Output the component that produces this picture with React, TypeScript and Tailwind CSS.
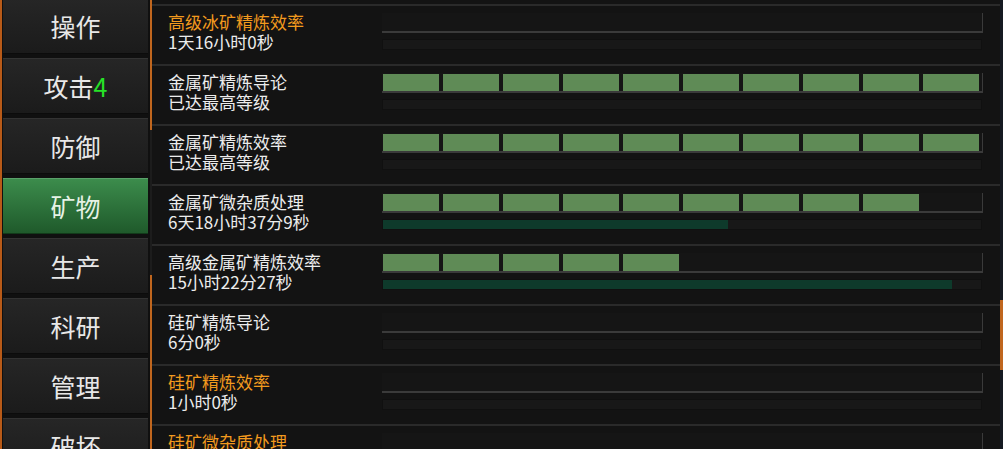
import React from "react";

type Tech = {
  name: string;
  sub: string;
  orange?: boolean;
  level: number;
  time?: number;
};

const techs: Tech[] = [
  { name: "高级冰矿精炼效率", sub: "1天16小时0秒", orange: true, level: 0 },
  { name: "金属矿精炼导论", sub: "已达最高等级", level: 10 },
  { name: "金属矿精炼效率", sub: "已达最高等级", level: 10 },
  { name: "金属矿微杂质处理", sub: "6天18小时37分9秒", level: 9, time: 345 },
  { name: "高级金属矿精炼效率", sub: "15小时22分27秒", level: 5, time: 569 },
  { name: "硅矿精炼导论", sub: "6分0秒", level: 0 },
  { name: "硅矿精炼效率", sub: "1小时0秒", orange: true, level: 0 },
  { name: "硅矿微杂质处理", sub: "", orange: true, level: 0 },
];

const tabs = ["操作", "攻击", "防御", "矿物", "生产", "科研", "管理", "破坏"];

function SideButton({ label, index }: { label: string; index: number }) {
  const active = label === "矿物";
  return (
    <div
      className={
        "h-[56px] shrink-0 flex items-center justify-center border-t border-b " +
        (active
          ? "bg-gradient-to-b from-[#3c8c4c] to-[#1f5a2b] border-t-[#5aa06a] border-b-[#123a1a]"
          : "bg-gradient-to-b from-[#262626] to-[#1b1b1b] border-t-[#333333] border-b-[#0c0c0c]")
      }
    >
      <span className={"text-[25px] leading-[30px] " + (active ? "text-[#e6f2e6]" : "text-[#e8e8e8]")}>
        {label}
        {index === 1 && <span className="text-[#27e127]">4</span>}
      </span>
    </div>
  );
}

function TechRow({ tech }: { tech: Tech }) {
  return (
    <div className="h-[60px] shrink-0 border-t-2 border-[#2a2a2a] flex">
      <div className="w-[230px] pl-[16px] pt-[6px] flex flex-col leading-[20px] text-[17px] whitespace-nowrap">
        <span className={tech.orange ? "text-[#f29a1e]" : "text-[#ececec]"}>{tech.name}</span>
        <span className="text-[#ececec]">{tech.sub}</span>
      </div>
      <div className="flex flex-col pt-[7px] gap-[6px]">
        <div className="w-[601px] h-[20px] bg-[#151515] border-r border-b-2 border-[#3a3a3a] flex gap-[4px] pl-[1px] pt-[1px]">
          {Array.from({ length: tech.level }).map((_, i) => (
            <div key={i} className="w-[56px] h-[17px] bg-[#5f8b56]" />
          ))}
        </div>
        <div className="w-[600px] h-[11px] bg-[#181818] border border-[#101010] flex">
          {tech.time && <div className="h-full bg-[#0e3a2b]" style={{ width: tech.time }} />}
        </div>
      </div>
    </div>
  );
}

export default function App() {
  return (
    <div
      className="w-[1003px] h-[449px] overflow-hidden bg-[#131313] flex"
      style={{ fontFamily: '"Noto Sans CJK SC", "Noto Sans", sans-serif' }}
    >
      <div className="w-[150px] shrink-0 flex border-l-2 border-[#b85a18] bg-[#101010]">
        <div className="w-[145px] flex flex-col gap-[4px] mt-[-2px] ml-[1px]">
          {tabs.map((t, i) => (
            <SideButton key={t} label={t} index={i} />
          ))}
        </div>
      </div>
      <div className="flex-1 flex">
        <div className="w-[2px] flex flex-col">
          <div className="h-[130px] bg-[#c0661e]" />
          <div className="h-[145px] bg-[#1c1c1c]" />
          <div className="flex-1 bg-[#c0661e]" />
        </div>
        <div className="flex-1 flex flex-col pt-[4px]">
          {techs.map((t) => (
            <TechRow key={t.name} tech={t} />
          ))}
        </div>
        <div className="w-[3px] flex flex-col bg-[#151a22]">
          <div className="h-[300px]" />
          <div className="h-[70px] bg-[#c0661e]" />
        </div>
      </div>
    </div>
  );
}
